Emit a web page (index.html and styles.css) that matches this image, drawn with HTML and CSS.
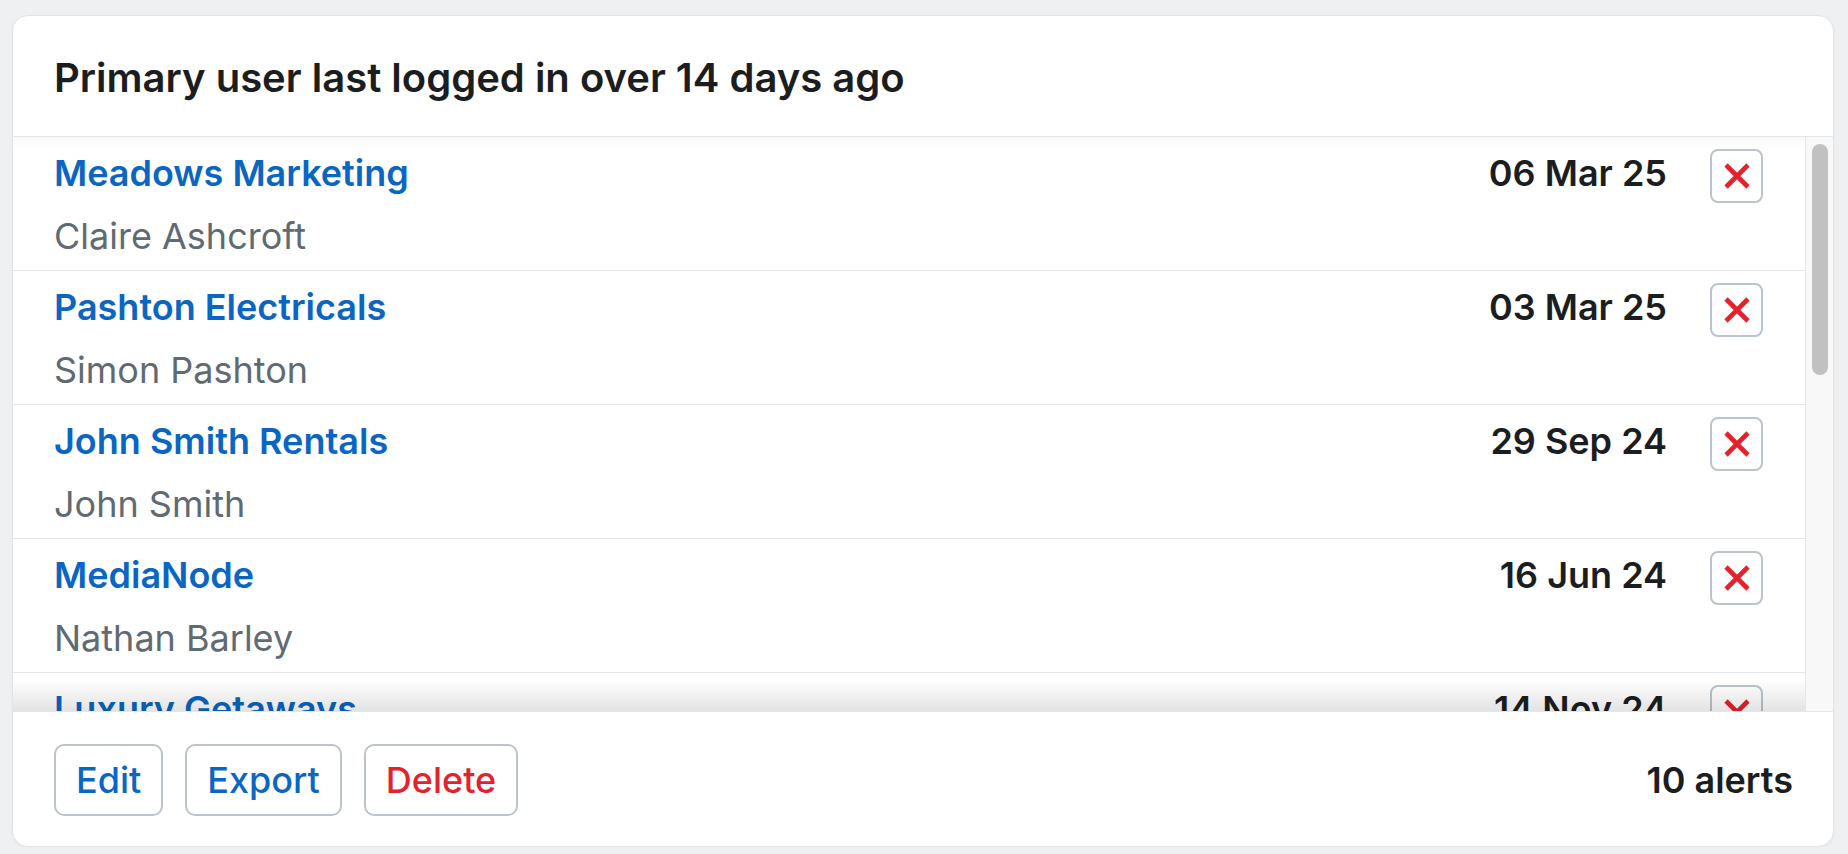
FILE: index.html
```html
<!DOCTYPE html>
<html lang="en">
<head>
<meta charset="utf-8">
<title>Alerts</title>
<link rel="stylesheet" href="styles.css">
</head>
<body>
<section class="card">
  <header class="card-header">
    <h1 class="title">Primary user last logged in over 14 days ago</h1>
  </header>
  <div class="list-wrap">
    <ul class="list">
      <li class="row">
        <div class="who"><a class="company" href="#">Meadows Marketing</a><div class="person">Claire Ashcroft</div></div>
        <div class="date">06 Mar 25</div>
        <button class="dismiss" aria-label="Dismiss"><svg viewBox="0 0 26 26" width="26" height="26"><path d="M2 2 L24 24 M24 2 L2 24" stroke="#e5222b" stroke-width="4.6" fill="none"/></svg></button>
      </li>
      <li class="row">
        <div class="who"><a class="company" href="#">Pashton Electricals</a><div class="person">Simon Pashton</div></div>
        <div class="date">03 Mar 25</div>
        <button class="dismiss" aria-label="Dismiss"><svg viewBox="0 0 26 26" width="26" height="26"><path d="M2 2 L24 24 M24 2 L2 24" stroke="#e5222b" stroke-width="4.6" fill="none"/></svg></button>
      </li>
      <li class="row">
        <div class="who"><a class="company" href="#">John Smith Rentals</a><div class="person">John Smith</div></div>
        <div class="date">29 Sep 24</div>
        <button class="dismiss" aria-label="Dismiss"><svg viewBox="0 0 26 26" width="26" height="26"><path d="M2 2 L24 24 M24 2 L2 24" stroke="#e5222b" stroke-width="4.6" fill="none"/></svg></button>
      </li>
      <li class="row">
        <div class="who"><a class="company" href="#">MediaNode</a><div class="person">Nathan Barley</div></div>
        <div class="date">16 Jun 24</div>
        <button class="dismiss" aria-label="Dismiss"><svg viewBox="0 0 26 26" width="26" height="26"><path d="M2 2 L24 24 M24 2 L2 24" stroke="#e5222b" stroke-width="4.6" fill="none"/></svg></button>
      </li>
      <li class="row">
        <div class="who"><a class="company" href="#">Luxury Getaways</a><div class="person">Emma Collins</div></div>
        <div class="date">14 Nov 24</div>
        <button class="dismiss" aria-label="Dismiss"><svg viewBox="0 0 26 26" width="26" height="26"><path d="M2 2 L24 24 M24 2 L2 24" stroke="#e5222b" stroke-width="4.6" fill="none"/></svg></button>
      </li>
      <li class="row">
        <div class="who"><a class="company" href="#">Harbour Bakery</a><div class="person">Tom Whitfield</div></div>
        <div class="date">02 Oct 24</div>
        <button class="dismiss" aria-label="Dismiss"><svg viewBox="0 0 26 26" width="26" height="26"><path d="M2 2 L24 24 M24 2 L2 24" stroke="#e5222b" stroke-width="4.6" fill="none"/></svg></button>
      </li>
      <li class="row">
        <div class="who"><a class="company" href="#">Greenleaf Gardens</a><div class="person">Sarah Green</div></div>
        <div class="date">21 Aug 24</div>
        <button class="dismiss" aria-label="Dismiss"><svg viewBox="0 0 26 26" width="26" height="26"><path d="M2 2 L24 24 M24 2 L2 24" stroke="#e5222b" stroke-width="4.6" fill="none"/></svg></button>
      </li>
      <li class="row">
        <div class="who"><a class="company" href="#">Northgate Plumbing</a><div class="person">David Hughes</div></div>
        <div class="date">11 Jul 24</div>
        <button class="dismiss" aria-label="Dismiss"><svg viewBox="0 0 26 26" width="26" height="26"><path d="M2 2 L24 24 M24 2 L2 24" stroke="#e5222b" stroke-width="4.6" fill="none"/></svg></button>
      </li>
      <li class="row">
        <div class="who"><a class="company" href="#">Brightside Dental</a><div class="person">Laura Bennett</div></div>
        <div class="date">05 May 24</div>
        <button class="dismiss" aria-label="Dismiss"><svg viewBox="0 0 26 26" width="26" height="26"><path d="M2 2 L24 24 M24 2 L2 24" stroke="#e5222b" stroke-width="4.6" fill="none"/></svg></button>
      </li>
      <li class="row">
        <div class="who"><a class="company" href="#">Oakwood Interiors</a><div class="person">Peter Oakley</div></div>
        <div class="date">18 Apr 24</div>
        <button class="dismiss" aria-label="Dismiss"><svg viewBox="0 0 26 26" width="26" height="26"><path d="M2 2 L24 24 M24 2 L2 24" stroke="#e5222b" stroke-width="4.6" fill="none"/></svg></button>
      </li>
    </ul>
    <div class="scrollbar" aria-hidden="true"><div class="thumb"></div></div>
  </div>
  <footer class="card-footer">
    <div class="actions">
      <button class="btn">Edit</button>
      <button class="btn">Export</button>
      <button class="btn btn-danger">Delete</button>
    </div>
    <div class="count">10 alerts</div>
  </footer>
</section>
</body>
</html>
```

FILE: styles.css
```css
* { box-sizing: border-box; }

html, body { margin: 0; }

body {
  padding: 15px 14px 0 12px;
  background: #eef0f2;
  font-family: Inter, "Noto Sans", "Liberation Sans", sans-serif;
  color: #1b1d1f;
}

.card {
  height: 832px;
  display: flex;
  flex-direction: column;
  background: #fff;
  border: 1px solid #e1e4e8;
  border-radius: 16px;
  box-shadow: 0 1px 3px rgba(0, 0, 0, 0.05);
  overflow: hidden;
}

.card-header {
  padding: 38px 41px 34px;
  border-bottom: 1px solid #e3e6ea;
}

.title {
  margin: 0;
  font-size: 40px;
  line-height: 48px;
  font-weight: 600;
  color: #1b1d1f;
}

.list-wrap {
  position: relative;
  flex: 1;
  min-height: 0;
  display: flex;
}

.list-wrap::before,
.list-wrap::after {
  content: "";
  position: absolute;
  left: 0;
  right: 28px;
  pointer-events: none;
}

.list-wrap::before {
  top: 0;
  height: 14px;
  background: linear-gradient(to bottom, rgba(0, 0, 0, 0.025), rgba(0, 0, 0, 0));
}

.list-wrap::after {
  bottom: 0;
  height: 32px;
  background: linear-gradient(to bottom, rgba(0, 0, 0, 0), rgba(0, 0, 0, 0.11));
}

.list {
  flex: 1;
  min-width: 0;
  list-style: none;
  margin: 0;
  padding: 0;
  overflow: hidden;
}

.scrollbar {
  width: 28px;
  flex: none;
  background: #f8f8f9;
  border-left: 1px solid #e4e7ea;
  padding: 7px 5px 0 6px;
}

.thumb {
  height: 231px;
  border-radius: 8px;
  background: #c1c1c1;
}

.row {
  display: flex;
  align-items: flex-start;
  padding: 6px 42px 3px 41px;
  border-bottom: 1px solid #e3e6ea;
}

.who {
  flex: 1;
  min-width: 0;
}

.company {
  display: block;
  font-size: 36px;
  line-height: 61px;
  font-weight: 600;
  color: #0a66c2;
  text-decoration: none;
}

.person {
  margin-top: 2px;
  font-size: 36px;
  line-height: 61px;
  font-weight: 400;
  color: #5f6a72;
}

.date {
  font-size: 36px;
  line-height: 61px;
  font-weight: 600;
  color: #1b1d1f;
  margin-right: 43px;
}

.dismiss {
  width: 53px;
  height: 54px;
  margin-top: 6px;
  padding: 0;
  display: flex;
  align-items: center;
  justify-content: center;
  background: #fff;
  border: 2px solid #bcc3ca;
  border-radius: 8px;
}

.card-footer {
  display: flex;
  align-items: center;
  justify-content: space-between;
  padding: 32px 40px 30px 41px;
  border-top: 1px solid #e3e6ea;
}

.actions {
  display: flex;
  gap: 22px;
}

.btn {
  height: 72px;
  padding: 0 20px;
  background: #fff;
  border: 2px solid #bcc3ca;
  border-radius: 10px;
  font-family: inherit;
  font-size: 36px;
  line-height: 44px;
  font-weight: 500;
  color: #0a66c2;
}

.btn-danger {
  color: #e5222b;
}

.count {
  font-size: 36px;
  line-height: 44px;
  font-weight: 600;
  color: #1b1d1f;
}
```
